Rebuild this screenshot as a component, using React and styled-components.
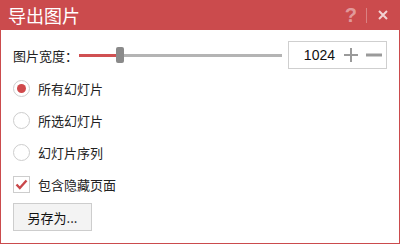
import React from "react";
import styled, { createGlobalStyle } from "styled-components";

const Global = createGlobalStyle`
  html, body { margin: 0; padding: 0; background: #fff; }
  body { font-family: "Microsoft YaHei", "Noto Sans CJK SC", sans-serif; }
`;

const Window = styled.div`
  width: 400px;
  height: 244px;
  box-sizing: border-box;
  border: 1px solid #cb4b4d;
  border-top: none;
  display: flex;
  flex-direction: column;
`;

const TitleBar = styled.div`
  height: 30px;
  margin: 0 -1px;
  background: #cb4b4d;
  display: flex;
  align-items: center;
  padding: 0 12px 0 8px;
  color: #fff;
`;

const Title = styled.div`
  flex: 1;
  font-size: 18px;
  line-height: 30px;
`;

const Help = styled.span`
  font-family: "Liberation Sans", sans-serif;
  font-weight: bold;
  font-size: 20px;
  line-height: 30px;
  color: rgba(255, 255, 255, 0.45);
`;

const Sep = styled.span`
  width: 1px;
  height: 15px;
  background: rgba(255, 255, 255, 0.3);
  margin: 0 11px 0 9px;
`;

const Body = styled.div`
  padding: 11px 12px 0 12px;
  display: flex;
  flex-direction: column;
  font-size: 13px;
  color: #222;
`;

const SizeRow = styled.div`
  display: flex;
  align-items: center;
  height: 28px;
`;

const Label = styled.span`
  width: 66px;
`;

const Slider = styled.div`
  position: relative;
  flex: 1;
  height: 16px;
  margin: 0 6px 0 0;
  display: flex;
  align-items: center;
`;

const Track = styled.div`
  height: 3px;
  flex: ${(p) => p.$grow};
  background: ${(p) => p.$color};
`;

const Thumb = styled.div`
  width: 8px;
  height: 16px;
  border-radius: 2px;
  background: #8a8a8a;
`;

const NumberBox = styled.div`
  width: 99px;
  height: 28px;
  box-sizing: border-box;
  border: 1px solid #cfcfcf;
  display: flex;
  align-items: center;
  justify-content: flex-end;
  padding-right: 4px;
`;

const Value = styled.span`
  font-family: "Liberation Sans", Arial, sans-serif;
  font-size: 14px;
  color: #111;
  margin-right: 9px;
`;

const Step = styled.svg`
  display: block;
  margin-left: ${(p) => p.$gap || 0}px;
`;

const Options = styled.div`
  margin-top: 3px;
  display: flex;
  flex-direction: column;
`;

const OptionRow = styled.label`
  height: 32px;
  display: flex;
  align-items: center;
  gap: 8px;
  font-size: 13px;
`;

const RadioMark = styled.span`
  width: 17px;
  height: 17px;
  box-sizing: border-box;
  border-radius: 50%;
  border: 1px solid #cdcdcd;
  display: flex;
  align-items: center;
  justify-content: center;
  &::after {
    content: "";
    width: 9px;
    height: 9px;
    border-radius: 50%;
    background: ${(p) => (p.$checked ? "#d04a4c" : "transparent")};
  }
`;

const CheckMark = styled.span`
  width: 17px;
  height: 17px;
  box-sizing: border-box;
  border: 1px solid #cdcdcd;
  display: flex;
  align-items: center;
  justify-content: center;
`;

const SaveButton = styled.button`
  margin-top: 3px;
  width: 79px;
  height: 28px;
  box-sizing: border-box;
  border: 1px solid #cdcdcd;
  background: #f3f3f3;
  font-family: inherit;
  font-size: 13px;
  color: #111;
  padding: 0;
`;

function Radio({ checked, children }) {
  return (
    <OptionRow>
      <RadioMark $checked={checked} />
      {children}
    </OptionRow>
  );
}

export default function App() {
  return (
    <>
      <Global />
      <Window>
        <TitleBar>
          <Title>导出图片</Title>
          <Help>?</Help>
          <Sep />
          <svg width="10" height="10" viewBox="0 0 10 10">
            <path d="M1 1L9 9M9 1L1 9" stroke="rgba(255,255,255,0.75)" strokeWidth="2" />
          </svg>
        </TitleBar>
        <Body>
          <SizeRow>
            <Label>图片宽度：</Label>
            <Slider>
              <Track $grow="37" $color="#d05052" />
              <Thumb />
              <Track $grow="157" $color="#b4b4b4" />
            </Slider>
            <NumberBox>
              <Value>1024</Value>
              <Step width="14" height="14" viewBox="0 0 14 14">
                <path d="M7 0V14M0 7H14" stroke="#9a9a9a" strokeWidth="2" />
              </Step>
              <Step $gap="8" width="16" height="14" viewBox="0 0 16 14">
                <path d="M0 7H16" stroke="#9a9a9a" strokeWidth="3" />
              </Step>
            </NumberBox>
          </SizeRow>
          <Options>
            <Radio checked>所有幻灯片</Radio>
            <Radio>所选幻灯片</Radio>
            <Radio>幻灯片序列</Radio>
            <OptionRow>
              <CheckMark>
                <svg width="13" height="11" viewBox="0 0 13 11">
                  <path d="M1.5 5.5L4.8 9L11.5 1.5" fill="none" stroke="#c9474a" strokeWidth="2.4" />
                </svg>
              </CheckMark>
              包含隐藏页面
            </OptionRow>
          </Options>
          <div>
            <SaveButton>另存为...</SaveButton>
          </div>
        </Body>
      </Window>
    </>
  );
}
